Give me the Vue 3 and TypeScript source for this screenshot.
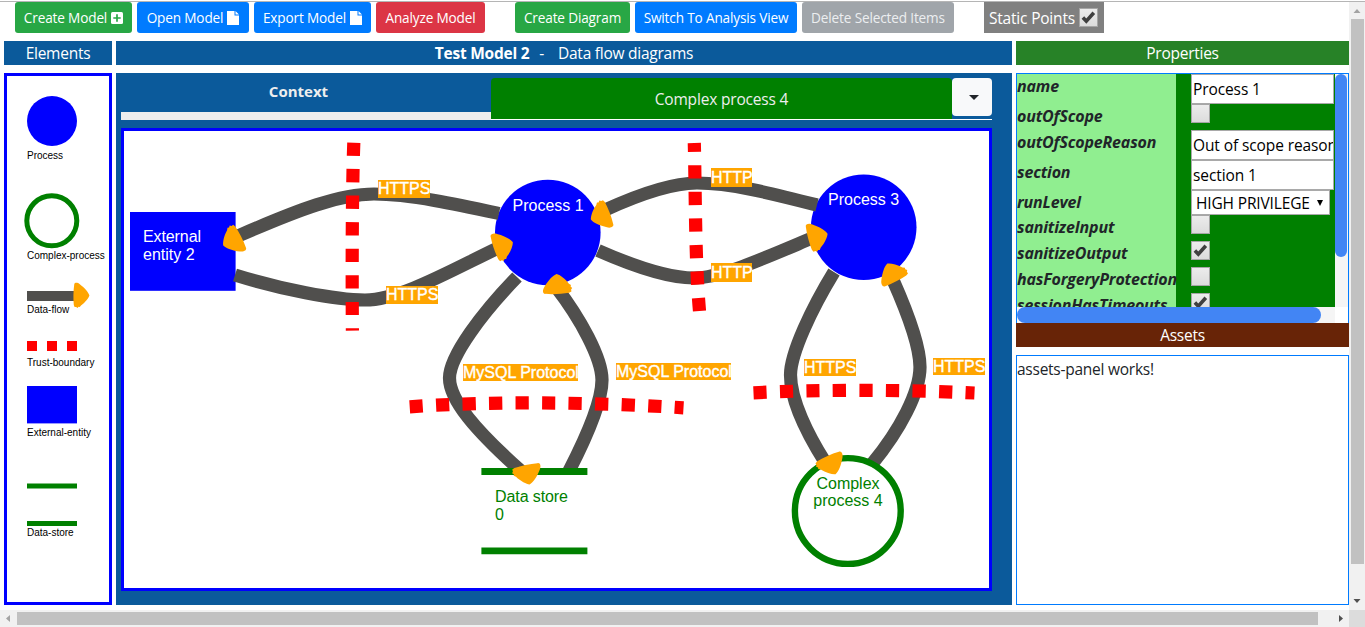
<script setup lang="ts">
interface Row {
  key: string
  kind: 'text' | 'flag' | 'choice'
  value?: string
  checked?: boolean
}

interface Label {
  x: number
  y: number
  w: number
  h: number
  base: number
  text: string
}

const rows: Row[] = [
  { key: 'name', kind: 'text', value: 'Process 1' },
  { key: 'outOfScope', kind: 'flag' },
  { key: 'outOfScopeReason', kind: 'text', value: 'Out of scope reason' },
  { key: 'section', kind: 'text', value: 'section 1' },
  { key: 'runLevel', kind: 'choice', value: 'HIGH PRIVILEGE' },
  { key: 'sanitizeInput', kind: 'flag' },
  { key: 'sanitizeOutput', kind: 'flag', checked: true },
  { key: 'hasForgeryProtection', kind: 'flag' },
  { key: 'sessionHasTimeouts', kind: 'flag', checked: true },
]

const flows: string[] = [
  'M238 236 C300 209 340 194 374 194 C410 194 460 205 499 213.5',
  'M235 275 C280 289 335 300 365 300 C400 300 450 271 497 248.5',
  'M605 210 C640 194 672 183 697 183 C730 183 770 193 817 205',
  'M598 250.5 C640 269 670 278 694 278 C720 278 760 260 811 238.5',
  'M517 277 C483 312 449.5 356 449.5 378 C449.5 400 475 430 522 472',
  'M556 287 C580 318 602 358 602 380 C602 403 586 438 569 471',
  'M834 272 C812 308 790.5 353 790.5 375 C790.5 400 808 435 825 462',
  'M872 464 C900 430 920 392 920 367 C920 345 905 307 893 280',
]

const boundaries: string[] = [
  'M353.8 142.7 C352 190 352 280 352.4 330.6',
  'M699.5 311 C695 260 695.5 190 694.3 143',
  'M409.7 406.8 C490 401 590 402 683.5 407.8',
  'M753.5 392.8 C820 389.5 900 389.5 974.5 393',
]

const heads: [number, number, number][] = [
  [240, 236.5, 152],
  [608.5, 212.5, 158],
  [495, 248.7, -20],
  [809.3, 239, -16],
  [558, 293, -94],
  [896.3, 280.3, -118],
  [525.3, 466, 77],
  [827.5, 457, 65],
]

const labels: Label[] = [
  { x: 378, y: 180, w: 52, h: 18, base: 194, text: 'HTTPS' },
  { x: 386, y: 286, w: 52, h: 18, base: 300, text: 'HTTPS' },
  { x: 711, y: 168, w: 41, h: 19, base: 183, text: 'HTTP' },
  { x: 711, y: 263, w: 41, h: 19, base: 278, text: 'HTTP' },
  { x: 463, y: 364, w: 115, h: 17, base: 378, text: 'MySQL Protocol' },
  { x: 616, y: 363, w: 115, h: 17, base: 377, text: 'MySQL Protocol' },
  { x: 804, y: 359, w: 52, h: 17, base: 373, text: 'HTTPS' },
  { x: 933, y: 358, w: 52, h: 17, base: 372, text: 'HTTPS' },
]

const headShape =
  'M0 -12.5 C0 -15.5 4 -15.5 7 -13.2 C13 -9 18 -4 19 0 C18 3 14 8 8.5 11.5 L7 13.5 L5.5 13 L4 14.5 L2.5 13.3 L0.5 13.5 L-0.5 11 C-1.2 4 -1.2 -5 0 -12.5Z'
</script>

<template>
  <div class="window">
    <div class="page">
      <div class="toolbar">
        <button class="btn success w117">
          <span>Create Model</span>
          <svg width="12" height="12" viewBox="0 0 12 12"><rect width="12" height="12" rx="1.5" fill="#fff" /><path d="M2.3 6H9.7M6 2.3V9.7" stroke="#28a745" stroke-width="1.7" /></svg>
        </button>
        <button class="btn primary w112">
          <span>Open Model</span>
          <svg width="12" height="14" viewBox="0 0 12 14"><path d="M0 0H7.5V4.5H12V14H0Z M8.5 0L12 3.6H8.5Z" fill="#fff" /></svg>
        </button>
        <button class="btn primary w117">
          <span>Export Model</span>
          <svg width="12" height="14" viewBox="0 0 12 14"><path d="M0 0H7.5V4.5H12V14H0Z M8.5 0L12 3.6H8.5Z" fill="#fff" /></svg>
        </button>
        <button class="btn danger w109"><span>Analyze Model</span></button>
        <button class="btn success w115 gap"><span>Create Diagram</span></button>
        <button class="btn primary w162"><span>Switch To Analysis View</span></button>
        <button class="btn muted w152"><span>Delete Selected Items</span></button>
        <label class="static gap"><span>Static Points</span>
          <i class="check"><svg width="19" height="19" viewBox="0 0 19 19"><path d="M3.9 9.6L7.3 13.2L14.8 4.8" /></svg></i>
        </label>
      </div>

      <div class="columns">
        <section class="elements">
          <h2 class="bar">Elements</h2>
          <div class="palette">
            <svg width="102" height="526" viewBox="7 76 102 526">
              <circle cx="52" cy="121" r="25" fill="#00f" />
              <circle cx="51.8" cy="220.8" r="25" fill="none" stroke="green" stroke-width="5" />
              <path d="M27 296H76" stroke="#504f4d" stroke-width="10" />
              <path :d="headShape" fill="orange" transform="translate(74.2 295.5) scale(.8 .86)" />
              <path d="M27 346H77" stroke="red" stroke-width="10" stroke-dasharray="10 10" />
              <rect x="27" y="386" width="50" height="37.4" fill="#00f" />
              <path d="M27 486H77M27 523.5H77" stroke="green" stroke-width="5" />
              <g class="tiny">
                <text x="27" y="159">Process</text>
                <text x="27" y="259">Complex-process</text>
                <text x="27" y="313">Data-flow</text>
                <text x="27" y="366">Trust-boundary</text>
                <text x="27" y="436">External-entity</text>
                <text x="27" y="536">Data-store</text>
              </g>
            </svg>
          </div>
        </section>

        <section class="diagrams">
          <h2 class="bar"><b>Test Model 2</b><span class="dash">-</span><span>Data flow diagrams</span></h2>
          <div class="board">
            <div class="tabs">
              <div class="tab context"><b>Context</b></div>
              <div class="tab active"><span>Complex process 4</span></div>
              <button class="more"><svg width="10" height="5" viewBox="0 0 10 5"><path d="M0 0H10L5 5Z" fill="#212529" /></svg></button>
            </div>
            <div class="canvas">
              <svg width="865" height="457" viewBox="124 131 865 457">
                <rect x="130" y="212" width="105.6" height="78.8" fill="#00f" />
                <circle cx="547.8" cy="232.5" r="52.8" fill="#00f" />
                <circle cx="863.7" cy="227.3" r="52.8" fill="#00f" />
                <path v-for="d in flows" :key="d" :d="d" class="flow" />
                <path d="M481.4 471.5H587.4M481.4 550.8H587.4" stroke="green" stroke-width="6.8" />
                <circle cx="847.8" cy="511" r="52.9" fill="#fff" stroke="green" stroke-width="6.4" />
                <path v-for="h in heads" :key="h[0]" :d="headShape" fill="orange" :transform="`translate(${h[0]} ${h[1]}) rotate(${h[2]})`" />
                <path v-for="d in boundaries" :key="d" :d="d" class="trust" />
                <g v-for="l in labels" :key="l.x + '-' + l.y">
                  <rect :x="l.x" :y="l.y" :width="l.w" :height="l.h" fill="orange" />
                  <text :x="l.x" :y="l.base" class="tag">{{ l.text }}</text>
                </g>
                <g class="node light">
                  <text x="143" y="242" textLength="58">External</text>
                  <text x="143" y="260">entity 2</text>
                  <text x="512.5" y="211">Process 1</text>
                  <text x="828" y="205">Process 3</text>
                </g>
                <g class="node dark">
                  <text x="495" y="502" textLength="73">Data store</text>
                  <text x="495" y="520">0</text>
                  <text x="848" y="489" text-anchor="middle">Complex</text>
                  <text x="848" y="506" text-anchor="middle">process 4</text>
                </g>
              </svg>
            </div>
          </div>
        </section>

        <section class="side">
          <h2 class="bar green">Properties</h2>
          <div class="props">
            <div class="grid">
              <div v-for="r in rows" :key="r.key" class="row" :class="r.kind">
                <div class="key">{{ r.key }}</div>
                <div class="val">
                  <div v-if="r.kind === 'text'" class="input"><span>{{ r.value }}</span></div>
                  <div v-else-if="r.kind === 'choice'" class="select"><span>{{ r.value }}</span>
                    <svg width="6" height="6" viewBox="0 0 6 6"><path d="M0 0H6L3 6Z" /></svg>
                  </div>
                  <i v-else class="check"><svg v-if="r.checked" width="19" height="19" viewBox="0 0 19 19"><path d="M3.9 9.6L7.3 13.2L14.8 4.8" /></svg></i>
                </div>
              </div>
            </div>
            <div class="vtrack"><div class="vthumb"></div></div>
            <div class="htrack"><div class="hthumb"></div></div>
          </div>
          <h2 class="bar brown">Assets</h2>
          <div class="assets">assets-panel works!</div>
        </section>
      </div>
    </div>

    <div class="scroll-v">
      <svg width="16" height="17" viewBox="0 0 16 17"><path d="M4.5 11H11.5L8 7Z" fill="#a3a3a3" /></svg>
      <div class="thumb"></div>
      <svg class="end" width="16" height="17" viewBox="0 0 16 17"><path d="M4.5 6H11.5L8 10Z" fill="#505050" /></svg>
    </div>
    <div class="scroll-h">
      <svg width="17" height="17" viewBox="0 0 17 17"><path d="M10 5V12L6 8.5Z" fill="#a3a3a3" /></svg>
      <div class="thumb"></div>
      <svg class="end" width="17" height="17" viewBox="0 0 17 17"><path d="M7 5V12L11 8.5Z" fill="#505050" /></svg>
    </div>
    <div class="corner"></div>
  </div>
</template>

<style>
body { margin: 0; overflow: hidden; }
</style>

<style scoped>
* { box-sizing: border-box; }
svg { display: block; flex: none; }
.window {
  width: 1365px; height: 627px; display: grid;
  grid-template: 609px 17px / 1349px 16px;
  border-top: 1px solid #fff;
  background: #fff; overflow: hidden;
  font-family: "Open Sans", "Noto Sans", sans-serif; font-size: 15.5px; color: #212529;
}
.page { border-top: 1px solid #b5b5b5; min-width: 0; }
.toolbar { display: flex; gap: 5px; height: 31px; padding-left: 15px; }
.btn {
  height: 31px; border: 0; border-radius: 3px; padding: 0; color: #fff;
  font: 13.6px "Open Sans", "Noto Sans", sans-serif; letter-spacing: -0.15px;
  display: flex; align-items: center; justify-content: center; gap: 4px; white-space: nowrap;
}
.success { background: #28a745; }
.primary { background: #007bff; }
.danger { background: #dc3545; }
.muted { background: #a0a5aa; color: #eceef0; }
.w109 { width: 109px; } .w112 { width: 112px; } .w115 { width: 115px; }
.w117 { width: 117px; } .w152 { width: 152px; } .w162 { width: 162px; }
.gap { margin-left: 25px; }
.static {
  width: 120px; height: 31px; background: #808080; color: #fff; padding-left: 5px;
  display: flex; align-items: center; gap: 4px; white-space: nowrap; letter-spacing: -0.2px;
}
.check {
  display: block; flex: none; width: 19px; height: 19px; border: 1px solid #a6a6a6;
  background: linear-gradient(#ececec, #dcdcdc);
}
.check svg { margin: -1px; }
.check path { fill: none; stroke: #404040; stroke-width: 3.6; }
.columns { display: flex; gap: 4px; margin: 8px 0 0 4px; }
.elements { width: 108px; } .diagrams { width: 896px; } .side { width: 333px; }
.bar {
  margin: 0; height: 24px; line-height: 24px; background: #0b5a9b; color: #fff;
  font-size: 15.5px; font-weight: 400; text-align: center; letter-spacing: -0.25px; white-space: nowrap;
}
.dash { margin: 0 14px 0 10px; }
.green { background: #278227; }
.brown { background: #682407; }
.palette { margin-top: 8px; height: 532px; border: 3px solid #00f; }
.tiny { font: 10px "Liberation Sans", Arial, sans-serif; }
.board { margin-top: 8px; height: 532px; background: #0b5a9b; padding: 5px 20px 14px 5px; }
.tabs {
  display: flex; height: 42px; width: 871px; color: #eee;
  background: linear-gradient(#fff, #fff) bottom / 100% 1px no-repeat;
}
.tab { text-align: center; }
.context { width: 370px; height: 42px; border-bottom: 8px solid #eee; line-height: 27px; padding-right: 15px; font-size: 15px; }
.active { width: 461px; height: 41px; background: green; border-radius: 4px 4px 0 0; line-height: 43px; letter-spacing: -0.18px; }
.more {
  width: 40px; height: 38px; border: 0; border-radius: 4px; background: #f8f9fa; padding: 0 0 0 3px;
  display: flex; align-items: center; justify-content: center;
}
.canvas { margin-top: 8px; width: 871px; height: 463px; border: 3px solid #00f; background: #fff; }
.flow { fill: none; stroke: #504f4d; stroke-width: 13.2; }
.trust { fill: none; stroke: red; stroke-width: 13.2; stroke-dasharray: 13.25 13.25; }
.tag { font: 16px "Liberation Sans", Arial, sans-serif; fill: #fff; stroke: #fff; stroke-width: 0.4px; }
.node { font: 16px "Liberation Sans", Arial, sans-serif; }
.light { fill: #fff; }
.dark { fill: green; }
.props {
  margin-top: 8px; height: 250px; border: 1px solid #007bff; border-bottom: 0;
  display: grid; grid-template: 233px 16px / 318px 13px;
}
.grid { overflow: hidden; background: linear-gradient(90deg, #90ee90 159px, green 159px); }
.row { display: grid; grid-template-columns: 159px 159px; height: 26px; }
.row.text { height: 30px; }
.row.choice { height: 25px; }
.key {
  line-height: 25px; height: 24px; font-weight: 700; font-style: italic; font-size: 16px;
  letter-spacing: -0.17px; white-space: nowrap;
}
.val { padding-left: 15px; }
.input {
  width: 143px; height: 30px; border: 1px solid #a9a9a9; background: #fff; color: #000;
  line-height: 29px; padding-left: 1px; overflow: hidden; white-space: nowrap; letter-spacing: -0.1px;
}
.select {
  width: 139px; height: 25px; border: 1px solid #a9a9a9; background: #fff; color: #000;
  display: flex; align-items: center; justify-content: space-between; padding: 0 6px 0 4px; white-space: nowrap;
  letter-spacing: -0.15px;
}
.vtrack { background: #f5f5f5; }
.vthumb { width: 12px; height: 183px; border-radius: 6px; background: #4285f4; }
.htrack { background: #f5f5f5; }
.hthumb { width: 304px; height: 16px; border-radius: 8px; background: #4285f4; }
.assets { margin-top: 8px; height: 250px; border: 1px solid #007bff; line-height: 26px; letter-spacing: -0.25px; }
.scroll-v { background: #f1f1f1; border-top: 1px solid #b5b5b5; display: flex; flex-direction: column; }
.scroll-v .thumb { margin-left: 2px; width: 13px; height: 545px; background: #c1c1c1; }
.scroll-h { background: #f1f1f1; display: flex; align-items: center; }
.scroll-h .thumb { width: 1301px; height: 13px; background: #c1c1c1; }
.scroll-v .end { margin-top: auto; }
.scroll-h .end { margin-left: auto; }
.corner { background: #dcdcdc; }
</style>
